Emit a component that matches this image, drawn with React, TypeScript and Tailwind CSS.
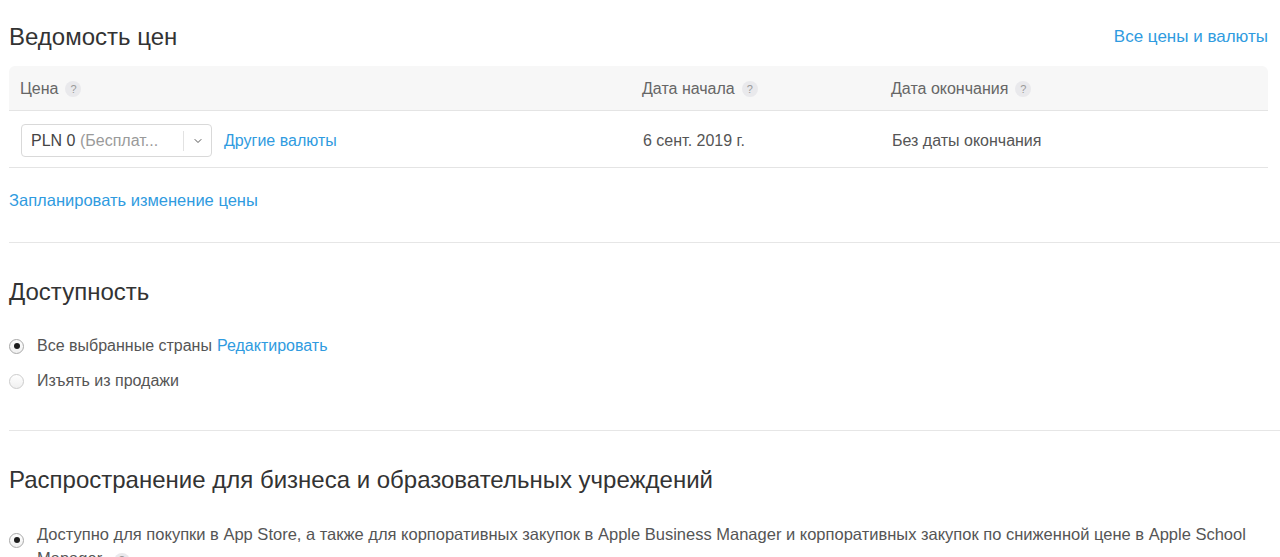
import { ChevronDown } from "lucide-react";

function Help() {
  return (
    <span className="ml-[7px] inline-flex h-[16px] w-[16px] items-center justify-center rounded-full bg-[#e9e9ec] text-[11px] leading-none text-[#999]">
      ?
    </span>
  );
}

function Radio({ checked }: { checked?: boolean }) {
  return (
    <span
      className={`mr-[13px] inline-flex h-[15px] w-[15px] shrink-0 items-center justify-center rounded-full border bg-gradient-to-b from-white to-[#f0f0f0] ${
        checked ? "border-[#a9a9a9]" : "border-[#cccccc]"
      }`}
    >
      {checked && <span className="h-[6px] w-[6px] rounded-full bg-[#1e1e1e]" />}
    </span>
  );
}

export default function App() {
  return (
    <div
      className="min-h-[557px] overflow-hidden bg-white pl-[9px] text-[16px] text-[#555]"
      style={{ fontFamily: '"Liberation Sans", Arial, sans-serif' }}
    >
      <div className="pr-[12px]">
        <div className="flex h-[66px] items-center justify-between pt-[8px]">
          <h2 className="text-[24px] font-normal text-[#333]">Ведомость цен</h2>
          <a className="text-[17px] text-[#2f9be0]">Все цены и валюты</a>
        </div>

        <div className="rounded-t-[6px] border-b border-[#e4e4e4] bg-[#f7f7f7]">
          <div className="grid h-[44px] grid-cols-[622px_249px_1fr] items-center px-[11px] pt-[2px] text-[#666]">
            <div className="flex items-center">Цена<Help /></div>
            <div className="flex items-center">Дата начала<Help /></div>
            <div className="flex items-center">Дата окончания<Help /></div>
          </div>
        </div>
        <div className="grid h-[57px] grid-cols-[622px_249px_1fr] items-center border-b border-[#e4e4e4] px-[12px] pt-[3px]">
          <div className="flex items-center">
            <div className="flex h-[33px] w-[191px] items-center rounded-[4px] border border-[#d9d9d9] bg-white">
              <span className="flex-1 truncate pl-[9px] text-[#444]">
                PLN 0 <span className="text-[#9a9a9a]">(Бесплат...</span>
              </span>
              <span className="h-[20px] w-px bg-[#e2e2e2]" />
              <span className="flex w-[27px] justify-center text-[#555]">
                <ChevronDown size={12} strokeWidth={2} />
              </span>
            </div>
            <a className="ml-[12px] text-[#2f9be0]">Другие валюты</a>
          </div>
          <div>6 сент. 2019 г.</div>
          <div>Без даты окончания</div>
        </div>

        <div className="flex h-[65px] items-center">
          <a className="text-[16.5px] text-[#2f9be0]">Запланировать изменение цены</a>
        </div>
      </div>

      <div className="mt-[9px] border-t border-[#e6e6e6]" />

      <div className="pr-[12px]">
        <h2 className="flex h-[100px] items-center pb-[2px] text-[24px] font-normal text-[#333]">Доступность</h2>
        <div className="-mt-[8px] flex flex-col gap-[13px]">
          <label className="flex h-[22px] items-center">
            <Radio checked />
            Все выбранные страны <a className="ml-[5px] text-[#2f9be0]">Редактировать</a>
          </label>
          <label className="flex h-[22px] items-center">
            <Radio />
            Изъять из продажи
          </label>
        </div>
      </div>

      <div className="mt-[38px] border-t border-[#e6e6e6]" />

      <div className="pr-[12px]">
        <h2 className="flex h-[98px] items-center text-[24px] font-normal text-[#333]">
          Распространение для бизнеса и образовательных учреждений
        </h2>
        <div className="-mt-[7px] flex items-start">
          <span className="mt-[4px]">
            <Radio checked />
          </span>
          <p className="text-[16.5px] leading-[24px]">
            Доступно для покупки в App Store, а также для корпоративных закупок в Apple Business Manager и
            корпоративных закупок по сниженной цене в Apple School Manager <Help />
          </p>
        </div>
      </div>
    </div>
  );
}
